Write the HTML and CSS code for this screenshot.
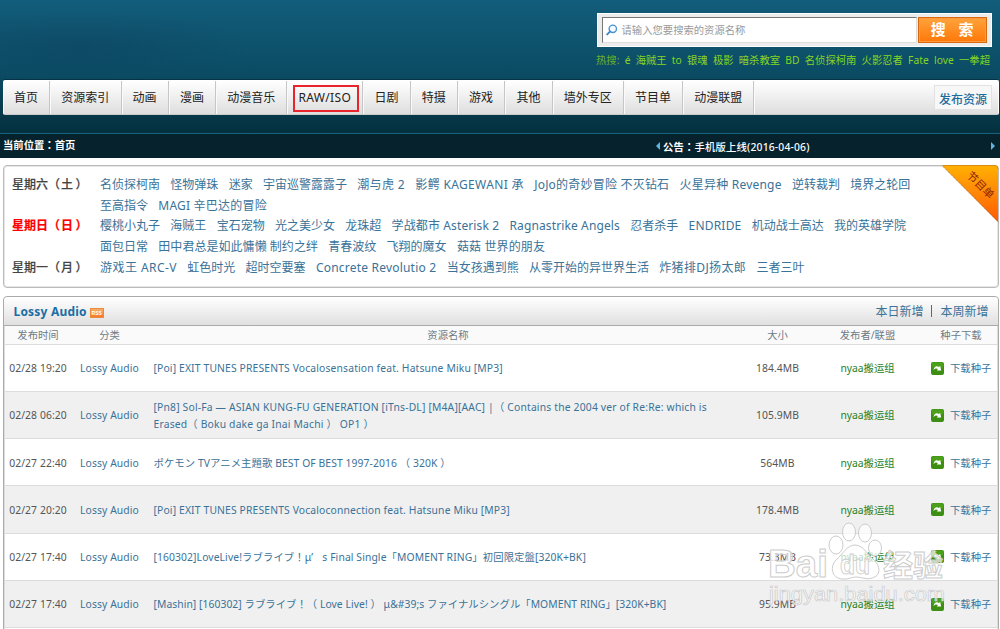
FILE: index.html
```html
<!DOCTYPE html>
<html lang="zh-CN">
<head>
<meta charset="utf-8">
<title>动漫资源</title>
<link rel="stylesheet" href="styles.css">
</head>
<body>
<header class="header">
  <div class="search-area">
    <form class="search">
      <div class="field">
        <svg width="12" height="12" viewBox="0 0 12 12"><circle cx="6.8" cy="4.8" r="3.7" fill="#f4faff" stroke="#4a94d4" stroke-width="1.4"/><path d="M4.2 7.4L1.2 10.4" stroke="#3f86c8" stroke-width="1.9" stroke-linecap="round"/></svg>
        <span>请输入您要搜索的资源名称</span>
      </div>
      <button class="submit" type="button"><span>搜</span><span>索</span></button>
    </form>
    <div class="hot"><span class="hot-label">热搜:</span><span>é</span><span>海贼王</span><span>to</span><span>银魂</span><span>极影</span><span>暗杀教室</span><span>BD</span><span>名侦探柯南</span><span>火影忍者</span><span>Fate</span><span>love</span><span>一拳超</span></div>
  </div>
  <nav class="nav">
    <a>首页</a><a>资源索引</a><a>动画</a><a>漫画</a><a>动漫音乐</a><a class="raw"><span>RAW/ISO</span></a><a>日剧</a><a>特摄</a><a>游戏</a><a>其他</a><a>墙外专区</a><a>节目单</a><a>动漫联盟</a>
    <span class="publish">发布资源</span>
  </nav>
</header>
<div class="crumbs">
  <b class="where">当前位置<span class="colon" lang="zh-TW">：</span>首页</b>
  <i class="arrow left"></i>
  <span class="notice"><b>公告<span class="colon" lang="zh-TW">：</span></b><span>手机版上线(2016-04-06)</span></span>
  <i class="arrow right"></i>
</div>
<section class="schedule">
  <div class="day"><b>星期六（<span>土</span>）</b>
    <div class="shows">
      <p><a>名侦探柯南</a><a>怪物弹珠</a><a>迷家</a><a>宇宙巡警露露子</a><a class="w3">潮与虎 2</a><a class="w3">影鳄 KAGEWANI 承</a><a class="w2">JoJo的奇妙冒险 不灭钻石</a><a class="w2">火星异种 Revenge</a><a>逆转裁判</a><a>境界之轮回</a></p>
      <p><a>至高指令</a><a class="w2">MAGI 辛巴达的冒险</a></p>
    </div>
  </div>
  <div class="day today"><b>星期日（<span>日</span>）</b>
    <div class="shows">
      <p><a>樱桃小丸子</a><a>海贼王</a><a>宝石宠物</a><a>光之美少女</a><a>龙珠超</a><a class="w1">学战都市 Asterisk 2</a><a class="w1">Ragnastrike Angels</a><a>忍者杀手</a><a class="w2">ENDRIDE</a><a>机动战士高达</a><a>我的英雄学院</a></p>
      <p><a>面包日常</a><a class="w0">田中君总是如此慵懒 制约之绊</a><a>青春波纹</a><a>飞翔的魔女</a><a class="w1">菇菇 世界的朋友</a></p>
    </div>
  </div>
  <div class="day"><b>星期一（<span>月</span>）</b>
    <div class="shows">
      <p><a class="w4">游戏王 ARC-V</a><a>虹色时光</a><a>超时空要塞</a><a class="w2">Concrete Revolutio 2</a><a>当女孩遇到熊</a><a>从零开始的异世界生活</a><a class="w3">炸猪排DJ扬太郎</a><a>三者三叶</a></p>
    </div>
  </div>
  <svg class="ribbon" width="57" height="57" viewBox="0 0 57 57">
    <defs><linearGradient id="rib" x1="0" y1="0" x2="0" y2="1"><stop offset="0" stop-color="#ffb000"/><stop offset=".45" stop-color="#ff8a08"/><stop offset="1" stop-color="#ff5a00"/></linearGradient></defs>
    <path d="M0 .5H53Q56 .5 56 4V57Z" fill="url(#rib)"/>
    <path d="M0 .5L56 56.5" stroke="#a8642c" stroke-width=".8" stroke-dasharray="1.5 .8"/>
    <path d="M1 .5H53Q56 .5 56 4" fill="none" stroke="#d98c14"/>
    <text transform="translate(38.6 20) rotate(45)" text-anchor="middle" y="4" class="ribbon-text">节目单</text>
  </svg>
</section>
<section class="list">
  <div class="list-head">
    <h2>Lossy Audio</h2><span class="rss">RSS</span>
    <div class="filters"><a>本日新增</a><i></i><a>本周新增</a></div>
  </div>
  <div class="row columns"><span>发布时间</span><span>分类</span><span>资源名称</span><span>大小</span><span>发布者/联盟</span><span>种子下载</span></div>
  <div class="row"><span>02/28 19:20</span><a>Lossy Audio</a><a class="title"><span class="t1">[Poi] EXIT TUNES PRESENTS Vocalosensation feat. Hatsune Miku [MP3]</span></a><span>184.4MB</span><a class="team">nyaa搬运组</a><a class="dl"><svg class="ic"><use href="#dl"/></svg>下载种子</a></div>
  <div class="row alt"><span>02/28 06:20</span><a>Lossy Audio</a><a class="title"><span class="t2">[Pn8] Sol-Fa — ASIAN KUNG-FU GENERATION [iTns-DL] [M4A][AAC] |（ Contains the 2004 ver of Re:Re: which is<br>Erased（ Boku dake ga Inai Machi ） OP1 ）</span></a><span>105.9MB</span><a class="team">nyaa搬运组</a><a class="dl"><svg class="ic"><use href="#dl"/></svg>下载种子</a></div>
  <div class="row"><span>02/27 22:40</span><a>Lossy Audio</a><a class="title"><span class="t3">ポケモン TVアニメ主題歌 BEST OF BEST 1997-2016 （ 320K ）</span></a><span>564MB</span><a class="team">nyaa搬运组</a><a class="dl"><svg class="ic"><use href="#dl"/></svg>下载种子</a></div>
  <div class="row alt"><span>02/27 20:20</span><a>Lossy Audio</a><a class="title"><span class="t1">[Poi] EXIT TUNES PRESENTS Vocaloconnection feat. Hatsune Miku [MP3]</span></a><span>178.4MB</span><a class="team">nyaa搬运组</a><a class="dl"><svg class="ic"><use href="#dl"/></svg>下载种子</a></div>
  <div class="row"><span>02/27 17:40</span><a>Lossy Audio</a><a class="title"><span class="t5">[160302]LoveLive!ラブライブ<span class="colon" lang="zh-TW">！</span>μ<i>’</i>s Final Single「MOMENT RING」初回限定盤[320K+BK]</span></a><span>73.3MB</span><a class="team">nyaa搬运组</a><a class="dl"><svg class="ic"><use href="#dl"/></svg>下载种子</a></div>
  <div class="row alt"><span>02/27 17:40</span><a>Lossy Audio</a><a class="title"><span class="t6">[Mashin] [160302] ラブライブ<span class="colon" lang="zh-TW">！</span>（ Love Live! ） μ&amp;#39;s ファイナルシングル「MOMENT RING」[320K+BK]</span></a><span>95.9MB</span><a class="team">nyaa搬运组</a><a class="dl"><svg class="ic"><use href="#dl"/></svg>下载种子</a></div>
</section>
<svg class="defs" width="0" height="0"><symbol id="dl" viewBox="0 0 13 13"><rect width="13" height="13" rx="2" fill="#3c8f12"/><rect x=".6" y=".6" width="11.8" height="5" rx="1.5" fill="#4ca01c"/><path d="M2.4 8.1C3 4.3 6 3.4 7.8 5.1L9.2 3.9L10.2 8.4H5.8L6.9 7.1C5.6 5.9 3.8 6.2 2.4 8.1Z" fill="#fff"/></symbol></svg>
<svg class="watermark" width="190" height="96" viewBox="0 0 190 96">
  <g class="wm-shape">
    <text x="2" y="57" class="wm-bai" textLength="60" lengthAdjust="spacingAndGlyphs">Bai</text>
    <ellipse cx="70" cy="25" rx="7" ry="9"/><ellipse cx="83" cy="12" rx="6.5" ry="9"/><ellipse cx="99" cy="13" rx="6.5" ry="9"/><ellipse cx="109" cy="28" rx="6.5" ry="8"/>
    <path d="M89 25C81 25 77 34 70 40C64 46 65 58 76 59C82 60 85 57 90 57C96 57 100 60 106 58C115 56 115 46 107 39C101 34 97 25 89 25Z"/>
    <text x="117" y="56" class="wm-cn">经验</text>
    <text x="3" y="81" class="wm-url" textLength="176" lengthAdjust="spacingAndGlyphs">jingyan.baidu.com</text>
  </g>
  <text x="74" y="54" class="wm-du" textLength="30" lengthAdjust="spacingAndGlyphs">du</text>
</svg>
</body>
</html>
```
FILE: styles.css
```css
* { box-sizing: border-box; }
body { margin: 0; width: 1000px; height: 629px; overflow: hidden; background: #fff; position: relative;
  font: 10.33px/17px "Noto Sans", "Noto Sans CJK SC", "Noto Sans CJK JP", sans-serif; color: #555; }
a { color: #3a7298; }
p, h2 { margin: 0; }

.header { height: 133px; padding: 13px 1px 0 3px;
  background: radial-gradient(ellipse 170px 36px at 80px 46px, rgba(14,62,92,.4), transparent), linear-gradient(#125d7b, #0b4c64 55%, #04303f); }
.search-area { margin-left: 593.5px; width: 396px; height: 67px; }
.search { display: flex; height: 34px; width: 395px; padding: 3px 4px; background: #ececec; border: 1px solid #fff; }
.field { display: flex; align-items: center; gap: 4px; width: 316px; height: 26px; margin-right: 1px; padding-left: 3px;
  background: #fff; border: 1px solid #777; border-right-color: #ddd; border-bottom-color: #ddd; color: #999; }
.submit { display: flex; justify-content: space-between; align-items: center; width: 69px; height: 26px; padding: 0 12px 2px;
  border: 1px solid #d96a10; background: linear-gradient(#ffa33c, #ff7808); color: #fff;
  font: bold 15px/20px "Noto Sans CJK SC", sans-serif; box-shadow: inset 0 0 0 1px #ff9a40; }
.hot { display: flex; justify-content: space-between; margin-top: 4.5px; margin-left: -.5px; width: 394px; color: #86d423; white-space: nowrap; }
.hot-label { color: #6cb02a; }

.nav { display: flex; height: 35px; padding-right: 6px;
  background: linear-gradient(#fff, #dedede); border: 1px solid #fff; border-bottom-color: #ccc; border-radius: 2px;
  font-size: 12px; line-height: 33px; color: #222; box-shadow: 0 -1px 0 #063348; }
.nav a { color: #222; padding: 0 11.2px 0 11.1px; border-right: 1px solid #c6c6c6; box-shadow: 1px 0 0 #fafafa; }
.nav a:first-child { padding-left: 10px; }
.nav .raw { width: 76px; padding: 0 3px 0 6px; display: flex; align-items: center; }
.raw span { width: 67px; height: 27px; margin-top: 2px; padding-left: 3px; border: 2px solid #e8252c; line-height: 21px; letter-spacing: .35px; }
.publish { margin: 4px 0 4px auto; padding: 0 4px; border: 1px solid #e2e2e2; color: #1f6c9c; line-height: 27px; font-weight: 500; background: #f7f7f7; }

.crumbs { height: 25px; display: flex; align-items: center; background: #06222d; border-top: 1px solid #17607e; color: #fff; padding: 0 5px 0 3px; }
.colon { font-family: "Noto Sans CJK TC", sans-serif; line-height: 1; }
.where { width: 653px; padding-bottom: 1px; }
.arrow { width: 0; height: 0; border: 4px solid transparent; }
.arrow.left { border-left: 0; border-right-color: #62b4dc; margin-right: 3px; }
.arrow.right { border-right: 0; border-left-color: #62b4dc; margin-left: auto; }
.notice { padding-top: 2px; font-weight: 500; letter-spacing: .18px; }

.schedule { position: relative; margin: 7px 1px 0 3px; height: 123px; padding: 9px 8px 0; border: 1px solid #bbb; border-radius: 4px;
  font-size: 12px; line-height: 20.7px; box-shadow: inset 0 0 0 1px #e6e6e6; }
.day { display: flex; }
.day > b { width: 88px; color: #444; font-weight: 500; -webkit-text-stroke: .2px; white-space: nowrap; }
.day > b span { margin: 0 2.5px 0 1px; }
.day.today > b { color: #f00; font-weight: bold; }
.shows p { display: flex; gap: 10.3px; height: 20.7px; white-space: nowrap; }
.w0 { letter-spacing: .04px; }
.w1 { letter-spacing: .12px; }
.w2 { letter-spacing: .21px; }
.w3 { letter-spacing: .35px; }
.w4 { letter-spacing: .45px; }
.ribbon { position: absolute; right: -1px; top: -1px; }
.ribbon-text { font: 11px "Noto Sans CJK SC", sans-serif; fill: #8e2503; }

.list { margin: 8px 1px 0 3px; border: 1px solid #aaa; border-radius: 4px 4px 0 0; box-shadow: inset 1px 0 #ddd, inset -1px 0 #ddd; height: 340px; }
.list-head { display: flex; align-items: center; height: 29px; padding: 0 9.5px; background: linear-gradient(#fff, #e0e0e0); border-bottom: 1px solid #aaa; border-radius: 4px 4px 0 0; }
h2 { font-size: 12px; line-height: 20px; color: #1b6da5; letter-spacing: .2px; padding-top: 1px; }
.rss { margin-left: 3px; margin-top: 3px; width: 14px; height: 10px; background: linear-gradient(#f3b066, #fa7828); border: 1px solid #e98b3c; color: #fff; font: bold 5px/8px "Liberation Sans", sans-serif; text-align: center; }
.filters { margin-left: auto; display: flex; align-items: center; gap: 8px; font-size: 12px; }
.filters i { width: 1px; height: 12px; background: #3a7298; }
.row { display: grid; grid-template-columns: 66px 77px 600px 59px 121px 66px; height: 47.15px; padding-top: 1.5px; margin: 0 1px; align-items: center; justify-items: center; border-bottom: 1px solid #dcdcdc; white-space: nowrap; letter-spacing: .1px; }
.row.alt { background: #f0f0f0; }
.row.columns { height: 19px; padding-top: 0; background: #fafafa; color: #6d7a86; letter-spacing: 0; }
.title { justify-self: start; padding-left: 5.5px; }
.t1 { letter-spacing: .148px; }
.t2 { letter-spacing: .18px; }
.t3 { letter-spacing: .09px; }
.t5 { letter-spacing: .11px; }
.t5 i { display: inline-block; width: 11px; font-style: normal; }
.t6 { letter-spacing: .06px; }
.team { color: #25821f; letter-spacing: 0; }
.dl { display: flex; align-items: center; gap: 6px; justify-self: start; padding-left: 3px; letter-spacing: 0; }
.ic { width: 13px; height: 13px; margin-top: -1px; }
.defs { position: absolute; }
.watermark { position: absolute; left: 766px; top: 520px; }
.wm-shape { fill: #fff; fill-opacity: .7; stroke: #ccc; stroke-width: 1; }
.wm-bai { font: bold 39px "Liberation Sans", sans-serif; }
.wm-cn { font: bold 30px "Noto Sans CJK SC", sans-serif; }
.wm-url { font: 21px "Liberation Sans", sans-serif; stroke-width: .7; }
.wm-du { font: bold 27px "Liberation Sans", sans-serif; fill: #fff; fill-opacity: .6; stroke: #ccc; stroke-width: .9; }
```
